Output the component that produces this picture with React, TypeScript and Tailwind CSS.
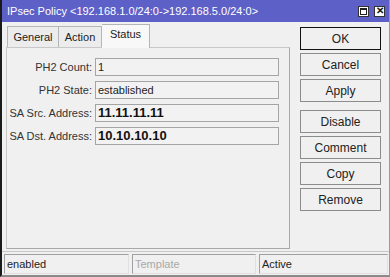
import React from "react";

const rows = [
  { label: "PH2 Count:", value: "1", bold: false },
  { label: "PH2 State:", value: "established", bold: false },
  { label: "SA Src. Address:", value: "11.11.11.11", bold: true },
  { label: "SA Dst. Address:", value: "10.10.10.10", bold: true },
];

const buttons = [
  { text: "OK", gap: 0, primary: true },
  { text: "Cancel", gap: 3, primary: false },
  { text: "Apply", gap: 3, primary: false },
  { text: "Disable", gap: 8, primary: false },
  { text: "Comment", gap: 3, primary: false },
  { text: "Copy", gap: 3, primary: false },
  { text: "Remove", gap: 3, primary: false },
];

export default function App() {
  return (
    <div
      className="w-[390px] h-[277px] bg-[#f0f0f0] flex flex-col overflow-hidden border-l-2 border-l-[#1a1a1a] border-r border-r-[#9a9a9a] border-b-2 border-b-[#8a8a8a] text-[11px] text-[#1e1e1e] whitespace-nowrap"
      style={{ fontFamily: '"Liberation Sans", Arial, sans-serif' }}
    >
      {/* title bar */}
      <div className="h-[22px] shrink-0 bg-[#5d60c6] flex items-center pl-[5px] pr-[4px] text-white text-[11px]">
        <span className="flex-1 truncate">IPsec Policy &lt;192.168.1.0/24:0-&gt;192.168.5.0/24:0&gt;</span>
        <div className="flex items-center gap-[5px]">
          <div className="w-[11px] h-[11px] bg-white border border-[#333] flex items-center justify-center">
            <div className="w-[7px] h-[7px] border border-[#222] border-t-2" />
          </div>
          <div className="w-[11px] h-[11px] bg-white border border-[#333] flex items-center justify-center text-[10px] font-bold leading-none text-[#111]">
            ✕
          </div>
        </div>
      </div>

      <div className="flex-1 flex pl-[2px]">
        {/* left: tabs + panel */}
        <div className="w-[286px] flex flex-col">
          <div className="h-[25px] flex items-end pl-[3px]">
            <div className="h-[21px] w-[52px] flex items-center justify-center border border-b-0 border-[#b5b5b5] bg-[#ececec] text-[#222]">
              General
            </div>
            <div className="h-[21px] w-[43px] flex items-center justify-center border border-b-0 border-l-0 border-[#b5b5b5] bg-[#ececec] text-[#222]">
              Action
            </div>
            <div className="h-[24px] w-[48px] pb-[4px] flex items-center justify-center border border-b-0 border-l-0 border-[#b5b5b5] bg-[#f8f8f8] -mb-px relative text-[#222]">
              Status
            </div>
          </div>
          <div className="h-[202px] ml-[2px] border border-[#c8c8c8] border-r-[#a8a8a8] border-b-[#a8a8a8] bg-[#f0f0f0] pt-[10px] flex flex-col gap-[5px]">
            {rows.map((r) => (
              <div key={r.label} className="flex items-center h-[18px]">
                <div className="w-[88px] text-right pr-[3px] text-[#333]">{r.label}</div>
                <div
                  className={
                    "w-[184px] h-[18px] border border-[#a5a5a5] bg-[#f2f2f2] flex items-center pl-[2px] " +
                    (r.bold ? "font-bold text-[13px] text-[#111]" : "text-[#222]")
                  }
                >
                  {r.value}
                </div>
              </div>
            ))}
          </div>
        </div>

        {/* right: buttons */}
        <div className="flex flex-col pl-[10px] pt-[5px]">
          {buttons.map((b) => (
            <div
              key={b.text}
              style={{ marginTop: b.gap }}
              className={
                "w-[81px] h-[23px] flex items-center justify-center bg-[#f0f0f0] text-[#222] text-[12px] " +
                (b.primary ? "border border-[#111]" : "border border-[#8c8c8c]")
              }
            >
              {b.text}
            </div>
          ))}
        </div>
      </div>

      {/* status bar */}
      <div className="h-[24px] shrink-0 border-t border-[#c8c8c8] flex items-center gap-[3px] pl-[2px] pr-[1px] pt-px">
        <div className="w-[125px] h-[20px] border border-[#a0a0a0] border-r-[#e0e0e0] border-b-[#e0e0e0] flex items-center pl-[2px] text-[#222]">
          enabled
        </div>
        <div className="w-[124px] h-[20px] border border-[#a0a0a0] border-r-[#e0e0e0] border-b-[#e0e0e0] flex items-center pl-[2px] text-[#a8a8a8]">
          Template
        </div>
        <div className="flex-1 h-[20px] border border-[#a0a0a0] border-r-[#e0e0e0] border-b-[#e0e0e0] flex items-center pl-[2px] text-[#222]">
          Active
        </div>
      </div>
    </div>
  );
}
